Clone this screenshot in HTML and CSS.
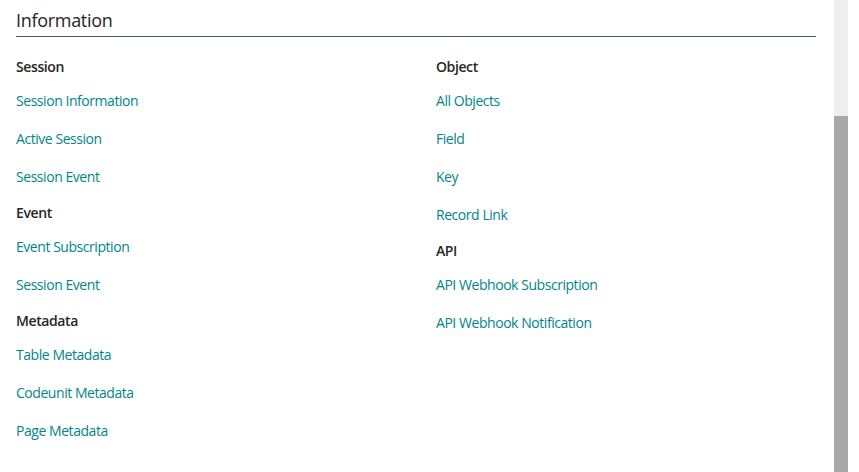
FILE: index.html
```html
<!DOCTYPE html>
<html>
<head>
<meta charset="utf-8">
<link rel="stylesheet" href="styles.css">
</head>
<body>
<div class="page">
  <main class="content">
    <h1 class="title">Information</h1>
    <div class="columns">
      <div class="col">
        <div class="group">
          <div class="ghead">Session</div>
          <a class="link">Session Information</a>
          <a class="link">Active Session</a>
          <a class="link">Session Event</a>
        </div>
        <div class="group">
          <div class="ghead">Event</div>
          <a class="link">Event Subscription</a>
          <a class="link">Session Event</a>
        </div>
        <div class="group">
          <div class="ghead">Metadata</div>
          <a class="link">Table Metadata</a>
          <a class="link">Codeunit Metadata</a>
          <a class="link">Page Metadata</a>
        </div>
      </div>
      <div class="col">
        <div class="group">
          <div class="ghead">Object</div>
          <a class="link">All Objects</a>
          <a class="link">Field</a>
          <a class="link">Key</a>
          <a class="link">Record Link</a>
        </div>
        <div class="group">
          <div class="ghead">API</div>
          <a class="link">API Webhook Subscription</a>
          <a class="link">API Webhook Notification</a>
        </div>
      </div>
    </div>
  </main>
  <div class="scrollbar"><div class="thumb"></div></div>
</div>
</body>
</html>
```
FILE: styles.css
```css
html, body {
  margin: 0;
  padding: 0;
  background: #fff;
}
body {
  font-family: "Open Sans", "Noto Sans", sans-serif;
  color: #333;
  width: 859px;
  height: 472px;
  overflow: hidden;
}
.page {
  display: flex;
  height: 472px;
}
.content {
  width: 800px;
  margin-left: 16px;
  margin-right: 18px;
}
.title {
  margin: 0;
  padding-top: 8px;
  padding-bottom: 4px;
  font-size: 18px;
  line-height: 24px;
  font-weight: 400;
  letter-spacing: -0.3px;
  color: #262626;
  border-bottom: 1px solid #4d5a6b;
}
.columns {
  display: flex;
  padding-top: 20px;
}
.col {
  width: 420px;
  flex-shrink: 0;
  display: flex;
  flex-direction: column;
}
.col + .col {
  width: 380px;
}
.group {
  display: flex;
  flex-direction: column;
}
.ghead {
  font-size: 14px;
  line-height: 20px;
  font-weight: 600;
  letter-spacing: -0.4px;
  color: #262626;
  padding-top: 7px;
  padding-bottom: 5px;
}
.group:first-child .ghead {
  padding-top: 0;
}
.link {
  font-size: 14px;
  line-height: 20px;
  letter-spacing: -0.45px;
  padding: 9px 0;
  color: #00868a;
  cursor: pointer;
}
.scrollbar {
  width: 14px;
  background: #eeeeee;
  display: flex;
  flex-direction: column;
  justify-content: flex-end;
}
.thumb {
  height: 356px;
  background: #a8a8a8;
}
```
